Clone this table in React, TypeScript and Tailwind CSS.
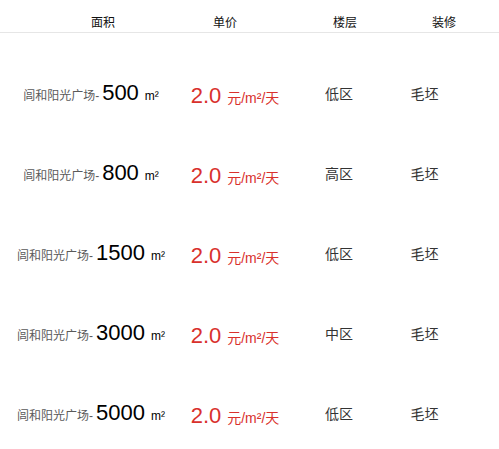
import React from "react";

const rows = [
  { area: "500", floor: "低区" },
  { area: "800", floor: "高区" },
  { area: "1500", floor: "低区" },
  { area: "3000", floor: "中区" },
  { area: "5000", floor: "低区" },
];

export default function App() {
  return (
    <div
      className="w-[499px] h-[449px] overflow-hidden bg-white"
      style={{ fontFamily: '"Liberation Sans", "Noto Sans CJK SC", sans-serif' }}
    >
      <div className="flex h-[33px] border-b border-[#e6e6e6] pt-[15px] text-[12px] leading-[16px] text-[#111]">
        <div className="w-[213px] pl-[91px]">面积</div>
        <div className="w-[120px]">单价</div>
        <div className="w-[99px]">楼层</div>
        <div>装修</div>
      </div>
      <div className="mt-[20px]">
        {rows.map((r, i) => (
          <div key={i} className="flex h-[80px] items-center">
            <div className="flex w-[182px] items-baseline justify-center">
              <span className="text-[12px] leading-[16px] text-[#5a5a5a]">闾和阳光广场-</span>
              <span className="ml-[3px] text-[22px] leading-[26px] text-black">{r.area}</span>
              <span className="ml-[6px] text-[12px] leading-[16px] text-black">m²</span>
            </div>
            <div className="flex w-[106px] items-baseline justify-center pt-[6px] text-[#d9302c]">
              <span className="text-[22px] leading-[26px]">2.0</span>
              <span className="ml-[6px] text-[14px] leading-[18px]">元/m²/天</span>
            </div>
            <div className="w-[102px] pt-[2px] text-center text-[14px] leading-[18px] text-[#333]">
              {r.floor}
            </div>
            <div className="w-[69px] pt-[2px] text-center text-[14px] leading-[18px] text-[#333]">
              毛坯
            </div>
          </div>
        ))}
      </div>
    </div>
  );
}
